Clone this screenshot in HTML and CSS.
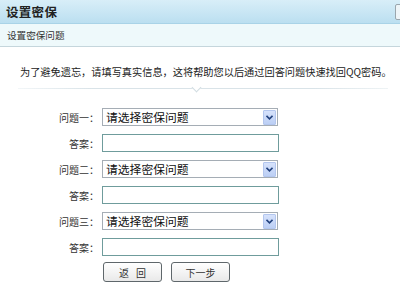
FILE: index.html
```html
<!DOCTYPE html>
<html lang="zh-CN">
<head>
  <meta charset="UTF-8">
  <title>设置密保</title>
  <link rel="stylesheet" href="styles.css">
</head>
<body>
  <div class="head">
    <h1>设置密保</h1>
    <span class="head-btn"></span>
  </div>
  <div class="sub">设置密保问题</div>
  <div class="content">
    <p class="tip">为了避免遗忘，请填写真实信息，这将帮助您以后通过回答问题快速找回QQ密码。</p>
    <div class="divider"><span class="notch"></span></div>
    <form class="qa">
      <label>问题一：</label>
      <div class="sel">
        <select name="q1"><option>请选择密保问题</option></select>
        <span class="arrow"><svg width="7" height="5" viewBox="0 0 7 5"><path d="M0.5 0.8 L3.5 3.8 L6.5 0.8" fill="none" stroke="#23427e" stroke-width="1.6"/></svg></span>
      </div>
      <label>答案：</label>
      <input type="text" name="a1">
      <label>问题二：</label>
      <div class="sel">
        <select name="q2"><option>请选择密保问题</option></select>
        <span class="arrow"><svg width="7" height="5" viewBox="0 0 7 5"><path d="M0.5 0.8 L3.5 3.8 L6.5 0.8" fill="none" stroke="#23427e" stroke-width="1.6"/></svg></span>
      </div>
      <label>答案：</label>
      <input type="text" name="a2">
      <label>问题三：</label>
      <div class="sel">
        <select name="q3"><option>请选择密保问题</option></select>
        <span class="arrow"><svg width="7" height="5" viewBox="0 0 7 5"><path d="M0.5 0.8 L3.5 3.8 L6.5 0.8" fill="none" stroke="#23427e" stroke-width="1.6"/></svg></span>
      </div>
      <label>答案：</label>
      <input type="text" name="a3">
      <div class="actions">
        <button type="button" class="wide">返 回</button>
        <button type="submit">下一步</button>
      </div>
    </form>
  </div>
</body>
</html>
```

FILE: styles.css
```css
body {
  margin: 0;
  background: #fff;
  color: #333;
  font-family: "Noto Sans CJK SC", "Liberation Sans", sans-serif;
  overflow: hidden;
}
.head {
  height: 23px;
  display: flex;
  align-items: center;
  justify-content: space-between;
  background: linear-gradient(#d8eef8, #bbdff0);
  border-bottom: 1px solid #a9d3e7;
}
.head h1 {
  margin: 0 0 0 6px;
  font-size: 12.5px;
  font-weight: bold;
  color: #222;
  letter-spacing: 0.3px;
}
.head-btn {
  width: 14px;
  height: 14px;
  margin-right: -11px;
  border: 1px solid #9aa6ad;
  border-radius: 2px;
  background: #eef5f8;
}
.sub {
  height: 22px;
  line-height: 22px;
  padding-left: 7px;
  font-size: 9.6px;
  color: #333;
  background: #eef9fb;
  border-bottom: 1px solid #c5d6dc;
}
.tip {
  margin: 17px 0 0 20px;
  font-size: 10.2px;
  line-height: 16px;
  color: #222;
  white-space: nowrap;
}
.divider {
  position: relative;
  margin: 8px 12px 0 18px;
  height: 1px;
  background: linear-gradient(to right, #f2f6f8, #d9e3e8 20%, #d9e3e8 80%, #eef3f5);
}
.notch {
  position: absolute;
  left: 175px;
  top: -4px;
  width: 6px;
  height: 6px;
  background: #fff;
  border-right: 1px solid #d2dde2;
  border-bottom: 1px solid #d2dde2;
  transform: rotate(45deg);
}
.qa {
  display: grid;
  grid-template-columns: 99px 176px;
  column-gap: 3px;
  row-gap: 8px;
  align-items: center;
  margin-top: 19px;
}
.qa label {
  text-align: right;
  font-size: 10px;
  color: #333;
}
.sel {
  display: flex;
  align-items: center;
  height: 16px;
  padding: 0 1px 0 0;
  border: 1px solid #a5adb5;
  background: #fff;
}
.sel select {
  flex: 1;
  appearance: none;
  border: none;
  background: transparent;
  font-family: "Noto Sans CJK SC", sans-serif;
  font-size: 11.8px;
  color: #111;
  padding: 0 0 0 3px;
  height: 16px;
  line-height: 16px;
}
.arrow {
  width: 11px;
  height: 13px;
  display: flex;
  align-items: center;
  justify-content: center;
  background: linear-gradient(#d6e2fb, #bccff5);
  border: 1px solid #b3c6ee;
  border-radius: 1px;
}
.qa input {
  width: 177px;
  height: 18px;
  box-sizing: border-box;
  border: 1px solid #6f9c9c;
  padding: 0 3px;
  margin: 0;
}
.actions {
  grid-column: 2;
  display: flex;
  gap: 9px;
  margin-top: -2px;
  padding-left: 1px;
}
.actions button {
  width: 59px;
  height: 20px;
  padding: 0;
  border: 1px solid #5f676b;
  border-radius: 3px;
  background: linear-gradient(#ffffff, #e9e9e9);
  font-family: "Noto Sans CJK SC", sans-serif;
  font-size: 10px;
  color: #333;
  cursor: pointer;
}
.actions .wide {
  word-spacing: 5px;
}
```
